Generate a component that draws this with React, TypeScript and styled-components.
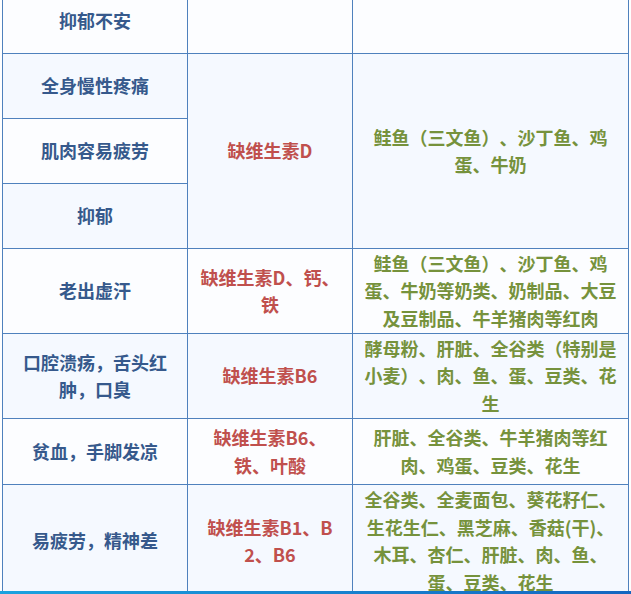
import React from 'react';
import styled, { createGlobalStyle } from 'styled-components';

const Global = createGlobalStyle`
  html, body { margin: 0; padding: 0; background: #ffffff; }
  body { font-family: "Noto Sans CJK SC", "Noto Sans", sans-serif; }
`;

const Page = styled.div`
  height: 594px;
  overflow: hidden;
  padding-left: 2px;
`;

const Table = styled.div`
  display: grid;
  grid-template-columns: 184px 164px 275px;
  grid-template-rows: 64px 64px 64px 64px 84px 84px 65px 112px;
  gap: 1px;
  padding: 1px;
  background: #4f81bd;
  width: max-content;
  margin-top: -12px;
`;

type Kind = 'sym' | 'vit' | 'food';

const colors: Record<Kind, string> = {
  sym: '#36598c',
  vit: '#c0504d',
  food: '#76923c',
};

const Cell = styled.div<{ $kind: Kind; $alt: boolean; $span?: number }>`
  display: flex;
  align-items: center;
  justify-content: center;
  text-align: center;
  padding: 0 8px;
  background: ${(p) => (p.$alt ? '#f5f9ff' : '#fcfdff')};
  color: ${(p) => colors[p.$kind]};
  font-size: 18px;
  font-weight: 700;
  line-height: 27.5px;
  white-space: nowrap;
  text-spacing-trim: space-all;
  font-feature-settings: "halt" 0, "chws" 0;
  grid-row: ${(p) => (p.$span ? `span ${p.$span}` : 'auto')};
`;

const BottomBar = styled.div`
  position: fixed;
  left: 0;
  right: 0;
  bottom: 0;
  height: 3px;
  background: linear-gradient(90deg, #1ba2df 0%, #1784d0 50%, #1466c0 100%);
`;

const Lines: React.FC<{ lines: string[] }> = ({ lines }) => (
  <span>
    {lines.map((l, i) => (
      <React.Fragment key={i}>
        {i > 0 && <br />}
        {l}
      </React.Fragment>
    ))}
  </span>
);

export default function App() {
  return (
    <>
      <Global />
      <Page>
        <Table>
          <Cell $kind="sym" $alt={false}><Lines lines={['抑郁不安']} /></Cell>
          <Cell $kind="vit" $alt={false} />
          <Cell $kind="food" $alt={false} />

          <Cell $kind="sym" $alt={true}><Lines lines={['全身慢性疼痛']} /></Cell>
          <Cell $kind="vit" $alt={true} $span={3}><Lines lines={['缺维生素D']} /></Cell>
          <Cell $kind="food" $alt={true} $span={3}>
            <Lines lines={['鲑鱼（三文鱼）、沙丁鱼、鸡', '蛋、牛奶']} />
          </Cell>
          <Cell $kind="sym" $alt={false}><Lines lines={['肌肉容易疲劳']} /></Cell>
          <Cell $kind="sym" $alt={true}><Lines lines={['抑郁']} /></Cell>

          <Cell $kind="sym" $alt={false}><Lines lines={['老出虚汗']} /></Cell>
          <Cell $kind="vit" $alt={false}><Lines lines={['缺维生素D、钙、', '铁']} /></Cell>
          <Cell $kind="food" $alt={false}>
            <Lines lines={['鲑鱼（三文鱼）、沙丁鱼、鸡', '蛋、牛奶等奶类、奶制品、大豆', '及豆制品、牛羊猪肉等红肉']} />
          </Cell>

          <Cell $kind="sym" $alt={true}><Lines lines={['口腔溃疡，舌头红', '肿，口臭']} /></Cell>
          <Cell $kind="vit" $alt={true}><Lines lines={['缺维生素B6']} /></Cell>
          <Cell $kind="food" $alt={true}>
            <Lines lines={['酵母粉、肝脏、全谷类（特别是', '小麦）、肉、鱼、蛋、豆类、花', '生']} />
          </Cell>

          <Cell $kind="sym" $alt={false}><Lines lines={['贫血，手脚发凉']} /></Cell>
          <Cell $kind="vit" $alt={false}><Lines lines={['缺维生素B6、', '铁、叶酸']} /></Cell>
          <Cell $kind="food" $alt={false}>
            <Lines lines={['肝脏、全谷类、牛羊猪肉等红', '肉、鸡蛋、豆类、花生']} />
          </Cell>

          <Cell $kind="sym" $alt={true}><Lines lines={['易疲劳，精神差']} /></Cell>
          <Cell $kind="vit" $alt={true}><Lines lines={['缺维生素B1、B', '2、B6']} /></Cell>
          <Cell $kind="food" $alt={true}>
            <Lines lines={['全谷类、全麦面包、葵花籽仁、', '生花生仁、黑芝麻、香菇(干)、', '木耳、杏仁、肝脏、肉、鱼、', '蛋、豆类、花生']} />
          </Cell>
        </Table>
      </Page>
      <BottomBar />
    </>
  );
}
